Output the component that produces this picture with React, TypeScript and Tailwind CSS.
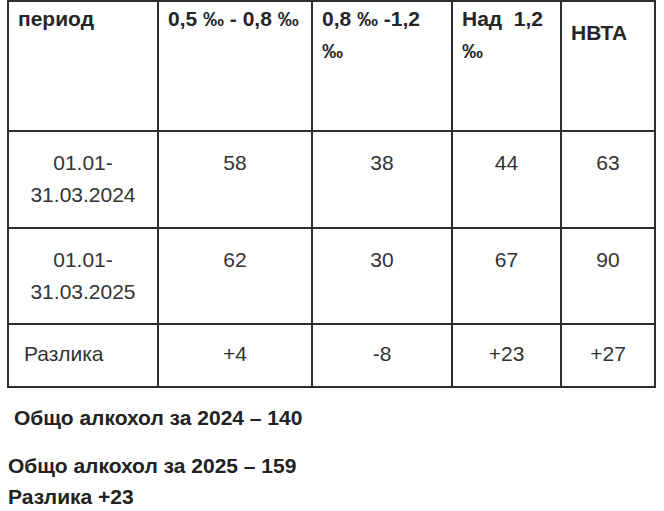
import React from "react";

const head = "border-r-2 border-b-2 border-[#2e2e2e] px-[9px] font-bold text-[#262626]";
const cell = "border-r-2 border-b-2 border-[#2e2e2e] pt-[15px] text-center text-[#333333]";

export default function App() {
  const rows = [
    { p: ["01.01-", "31.03.2024"], v: ["58", "38", "44", "63"] },
    { p: ["01.01-", "31.03.2025"], v: ["62", "30", "67", "90"] },
  ];
  return (
    <div
      className="w-[664px] h-[511px] bg-white overflow-hidden text-[21px] leading-[31.5px]"
      style={{ fontFamily: '"Liberation Sans", Arial, sans-serif' }}
    >
      <div className="ml-[7px] w-[649px] grid grid-cols-[150px_154px_140px_109px_94px] grid-rows-[130px_97px_96px_63px] border-l-2 border-t-2 border-[#2e2e2e]">
        <div className={head + " pt-[1px]"}>период</div>
        <div className={head + " pt-[1px]"}>0,5 ‰ - 0,8 ‰</div>
        <div className={head + " pt-[1px]"}>
          0,8 ‰ -1,2
          <br />‰
        </div>
        <div className={head + " pt-[1px]"}>
          Над&nbsp; 1,2
          <br />‰
        </div>
        <div className={head + " pt-[15px]"}>НВТА</div>

        {rows.map((r, i) => (
          <React.Fragment key={i}>
            <div className={cell}>
              {r.p[0]}
              <br />
              {r.p[1]}
            </div>
            {r.v.map((v, j) => (
              <div key={j} className={cell}>
                {v}
              </div>
            ))}
          </React.Fragment>
        ))}

        <div className="border-r-2 border-b-2 border-[#2e2e2e] pt-[13px] pl-[15px] text-[#333333]">Разлика</div>
        {["+4", "-8", "+23", "+27"].map((v, j) => (
          <div key={j} className="border-r-2 border-b-2 border-[#2e2e2e] pt-[13px] text-center text-[#333333]">
            {v}
          </div>
        ))}
      </div>

      <div className="mt-[14px] pl-[14px] font-bold text-[#222222]">Общо алкохол за 2024 – 140</div>
      <div className="mt-[16px] pl-[8px] font-bold text-[#222222]">Общо алкохол за 2025 – 159</div>
      <div className="pl-[8px] font-bold text-[#222222]">Разлика +23</div>
    </div>
  );
}
